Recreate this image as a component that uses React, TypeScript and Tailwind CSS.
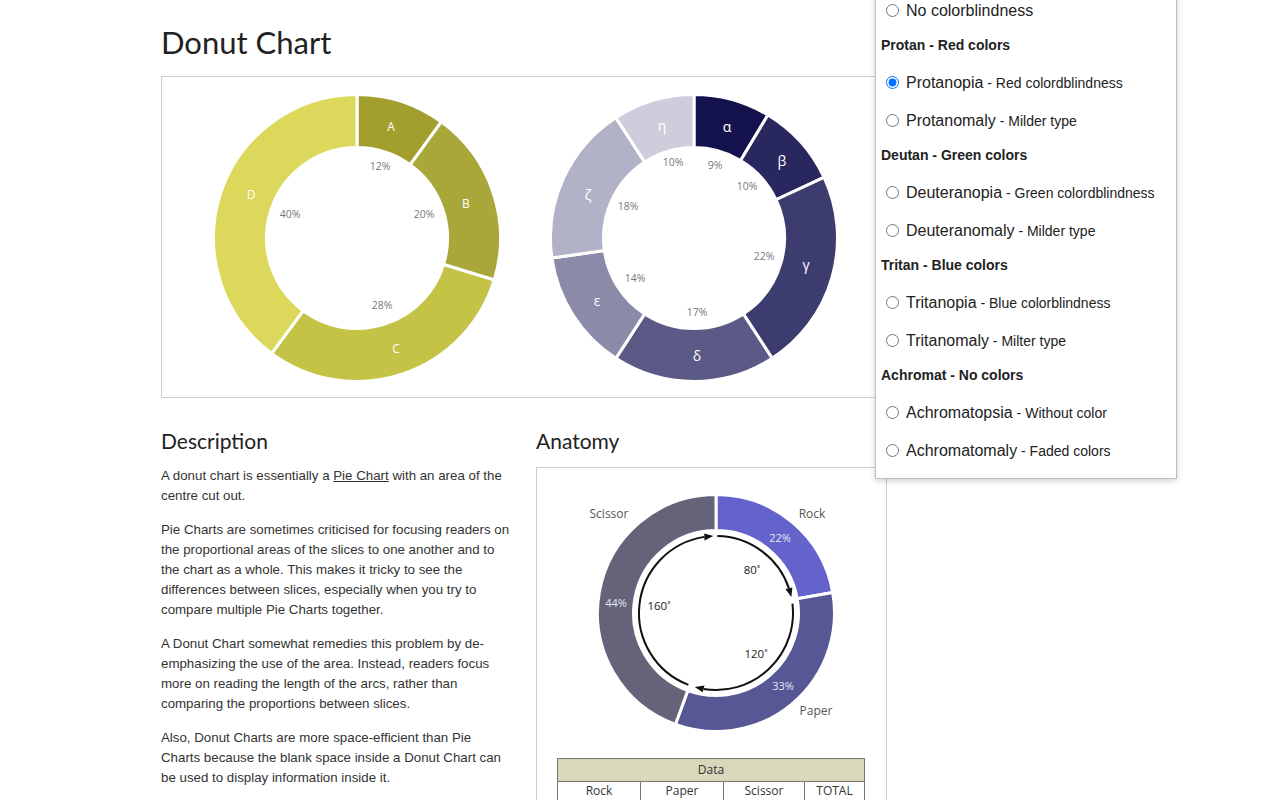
type Slice = { from: number; to: number; color: string };
type Label = { x: number; y: number; text: string };

function pt(cx: number, cy: number, r: number, deg: number) {
  const a = (deg * Math.PI) / 180;
  return [cx + r * Math.sin(a), cy - r * Math.cos(a)];
}

function slicePath(cx: number, cy: number, r0: number, r1: number, a0: number, a1: number) {
  const large = a1 - a0 > 180 ? 1 : 0;
  const [x1, y1] = pt(cx, cy, r1, a0);
  const [x2, y2] = pt(cx, cy, r1, a1);
  const [x3, y3] = pt(cx, cy, r0, a1);
  const [x4, y4] = pt(cx, cy, r0, a0);
  return `M${x1} ${y1} A${r1} ${r1} 0 ${large} 1 ${x2} ${y2} L${x3} ${y3} A${r0} ${r0} 0 ${large} 0 ${x4} ${y4} Z`;
}

// boundaries in degrees, clockwise from 12 o'clock
function toSlices(stops: number[], colors: string[]): Slice[] {
  return colors.map((color, i) => ({ from: stops[i], to: stops[i + 1], color }));
}

function Donut({
  cx,
  cy,
  r0,
  r1,
  slices,
}: {
  cx: number;
  cy: number;
  r0: number;
  r1: number;
  slices: Slice[];
}) {
  return (
    <g>
      {slices.map((s, i) => (
        <path
          key={i}
          d={slicePath(cx, cy, r0 - 1.5, r1 + 1.5, s.from, s.to)}
          fill={s.color}
          stroke="#fff"
          strokeWidth={3}
        />
      ))}
    </g>
  );
}

function Labels({ items, fill, size }: { items: Label[]; fill: string; size: number }) {
  return (
    <g fontFamily="'Open Sans', 'Noto Sans', sans-serif" fontSize={size} fill={fill}>
      {items.map((l, i) => (
        <text key={i} x={l.x} y={l.y} textAnchor="middle" dominantBaseline="central">
          {l.text}
        </text>
      ))}
    </g>
  );
}

const latinSlices = toSlices([0, 36, 107, 216.5, 360], ["#a29f2e", "#a9a739", "#c4c346", "#dbd85c"]);
const greekSlices = toSlices(
  [0, 31, 65, 147, 213, 262, 327, 360],
  ["#14124c", "#28285f", "#3d3c6f", "#5b5a86", "#8b8aa8", "#b1b1c7", "#cecddb"]
);

function ChartPanel() {
  return (
    <svg width={714} height={320} viewBox="162 77 714 320" className="block">
      <Donut cx={357} cy={238} r0={92} r1={142} slices={latinSlices} />
      <Labels
        fill="#fff"
        size={12}
        items={[
          { x: 391, y: 126, text: "A" },
          { x: 466, y: 203, text: "B" },
          { x: 396, y: 348, text: "C" },
          { x: 251, y: 194, text: "D" },
        ]}
      />
      <Labels
        fill="#777"
        size={10.5}
        items={[
          { x: 380, y: 166, text: "12%" },
          { x: 424, y: 214, text: "20%" },
          { x: 382, y: 305, text: "28%" },
          { x: 290, y: 214, text: "40%" },
        ]}
      />
      <Donut cx={694} cy={238} r0={92} r1={142} slices={greekSlices} />
      <Labels
        fill="#fff"
        size={14}
        items={[
          { x: 727, y: 126, text: "α" },
          { x: 782, y: 160, text: "β" },
          { x: 806, y: 264, text: "γ" },
          { x: 697, y: 355, text: "δ" },
          { x: 597, y: 300, text: "ε" },
          { x: 588, y: 194, text: "ζ" },
          { x: 662, y: 125, text: "η" },
        ]}
      />
      <Labels
        fill="#777"
        size={10.5}
        items={[
          { x: 715, y: 165, text: "9%" },
          { x: 747, y: 186, text: "10%" },
          { x: 764, y: 256, text: "22%" },
          { x: 697, y: 312, text: "17%" },
          { x: 635, y: 278, text: "14%" },
          { x: 628, y: 206, text: "18%" },
          { x: 673, y: 162, text: "10%" },
        ]}
      />
    </svg>
  );
}

// arrow arc running clockwise from a0 to the tip at a1
function ArrowArc({ cx, cy, r, a0, a1 }: { cx: number; cy: number; r: number; a0: number; a1: number }) {
  const len = 9;
  const back = a1 - (len / r) * (180 / Math.PI);
  const [sx, sy] = pt(cx, cy, r, a0);
  const [bx, by] = pt(cx, cy, r, back);
  const [tx, ty] = pt(cx, cy, r, a1);
  const t = (a1 * Math.PI) / 180;
  const nx = Math.sin(t);
  const ny = -Math.cos(t);
  const w = 3.5;
  const large = back - a0 > 180 ? 1 : 0;
  return (
    <g>
      <path d={`M${sx} ${sy} A${r} ${r} 0 ${large} 1 ${bx} ${by}`} fill="none" stroke="#111" strokeWidth={2} />
      <path
        d={`M${tx} ${ty} L${bx + nx * w} ${by + ny * w} L${bx - nx * w} ${by - ny * w} Z`}
        fill="#111"
      />
    </g>
  );
}

const anatomySlices: Slice[] = [
  { from: 0, to: 80, color: "#6363cb" },
  { from: 80, to: 200, color: "#575796" },
  { from: 200, to: 360, color: "#646379" },
];

function AnatomyChart() {
  return (
    <svg width={349} height={290} viewBox="537 468 349 290" className="block">
      <Donut cx={716} cy={613} r0={84} r1={117} slices={anatomySlices} />
      <ArrowArc cx={716} cy={613} r={77} a0={1} a1={78} />
      <ArrowArc cx={716} cy={613} r={77} a0={83} a1={196} />
      <ArrowArc cx={716} cy={613} r={77} a0={201} a1={358} />
      <Labels
        fill="#555"
        size={12}
        items={[
          { x: 609, y: 513, text: "Scissor" },
          { x: 812, y: 513, text: "Rock" },
          { x: 816, y: 710, text: "Paper" },
        ]}
      />
      <Labels
        fill="#e8e8f4"
        size={11}
        items={[
          { x: 780, y: 537, text: "22%" },
          { x: 616, y: 602, text: "44%" },
          { x: 783, y: 685, text: "33%" },
        ]}
      />
      <Labels
        fill="#222"
        size={11.5}
        items={[
          { x: 752, y: 569, text: "80˚" },
          { x: 659, y: 605, text: "160˚" },
          { x: 756, y: 653, text: "120˚" },
        ]}
      />
    </svg>
  );
}

type MenuRow = { kind: "head"; text: string } | { kind: "item"; main: string; sub?: string; checked?: boolean };

const menu: MenuRow[] = [
  { kind: "item", main: "No colorblindness" },
  { kind: "head", text: "Protan - Red colors" },
  { kind: "item", main: "Protanopia", sub: "Red colordblindness", checked: true },
  { kind: "item", main: "Protanomaly", sub: "Milder type" },
  { kind: "head", text: "Deutan - Green colors" },
  { kind: "item", main: "Deuteranopia", sub: "Green colordblindness" },
  { kind: "item", main: "Deuteranomaly", sub: "Milder type" },
  { kind: "head", text: "Tritan - Blue colors" },
  { kind: "item", main: "Tritanopia", sub: "Blue colorblindness" },
  { kind: "item", main: "Tritanomaly", sub: "Milter type" },
  { kind: "head", text: "Achromat - No colors" },
  { kind: "item", main: "Achromatopsia", sub: "Without color" },
  { kind: "item", main: "Achromatomaly", sub: "Faded colors" },
];

function ColorblindMenu() {
  return (
    <div className="absolute left-[875px] top-[-10px] w-[302px] border border-[#bdbdbd] bg-white pb-[9px] font-['Liberation_Sans',Arial,sans-serif] text-[#222] shadow-[0_2px_6px_rgba(0,0,0,0.18)]">
      {menu.map((row, i) =>
        row.kind === "head" ? (
          <div key={i} className="flex h-[34px] items-center pb-[2px] pl-[5px] text-[14px] font-bold">
            {row.text}
          </div>
        ) : (
          <label key={i} className="flex h-[38px] items-center gap-[7px] pl-[10px] pt-[1px]">
            <input
              type="radio"
              name="colorblind"
              defaultChecked={row.checked}
              className="m-0 h-[13px] w-[13px]"
            />
            <span className="text-[16px]">
              {row.main}
              {row.sub && <span className="text-[14px]"> - {row.sub}</span>}
            </span>
          </label>
        )
      )}
    </div>
  );
}

export default function App() {
  return (
    <div className="relative h-[800px] overflow-hidden bg-white font-['Liberation_Sans',Arial,sans-serif] text-[#333]">
      <div className="pl-[161px] pt-[24px]">
        <h1 className="font-['Lato',sans-serif] text-[31px] leading-[36px] text-[#222]">Donut Chart</h1>
        <div className="mt-[16px] h-[322px] w-[716px] border border-[#cccccc]">
          <ChartPanel />
        </div>

        <div className="mt-[30px] flex gap-[25px]">
          <div className="w-[350px] shrink-0">
            <h2 className="font-['Lato',sans-serif] text-[21px] leading-[26px] text-[#222]">Description</h2>
            <div className="mt-[12px] text-[13.3px] leading-[20px] text-[#333]">
              <p className="mb-[14px]">
                A donut chart is essentially a{" "}
                <a href="#" className="underline">
                  Pie Chart
                </a>{" "}
                with an area of the centre cut out.
              </p>
              <p className="mb-[14px]">
                Pie Charts are sometimes criticised for focusing readers on the proportional areas of the slices to
                one another and to the chart as a whole. This makes it tricky to see the differences between slices,
                especially when you try to compare multiple Pie Charts together.
              </p>
              <p className="mb-[14px]">
                A Donut Chart somewhat remedies this problem by de-emphasizing the use of the area. Instead, readers
                focus more on reading the length of the arcs, rather than comparing the proportions between slices.
              </p>
              <p>
                Also, Donut Charts are more space-efficient than Pie Charts because the blank space inside a Donut
                Chart can be used to display information inside it.
              </p>
            </div>
          </div>

          <div className="w-[351px] shrink-0">
            <h2 className="font-['Lato',sans-serif] text-[21px] leading-[26px] text-[#222]">Anatomy</h2>
            <div className="mt-[13px] h-[400px] border border-[#cccccc]">
              <AnatomyChart />
              <table className="ml-[20px] w-[308px] border-collapse font-['Open_Sans',sans-serif] text-[12px] text-[#333]">
                <thead>
                  <tr>
                    <th colSpan={4} className="h-[23px] border border-[#777] bg-[#d8d8bb] font-normal">
                      Data
                    </th>
                  </tr>
                </thead>
                <tbody>
                  <tr>
                    <td className="h-[24px] w-[83px] border border-[#777] align-top text-center">Rock</td>
                    <td className="w-[83px] border border-[#777] align-top text-center">Paper</td>
                    <td className="w-[81px] border border-[#777] align-top text-center">Scissor</td>
                    <td className="border border-[#777] align-top text-center">TOTAL</td>
                  </tr>
                </tbody>
              </table>
            </div>
          </div>
        </div>
      </div>

      <ColorblindMenu />
    </div>
  );
}
